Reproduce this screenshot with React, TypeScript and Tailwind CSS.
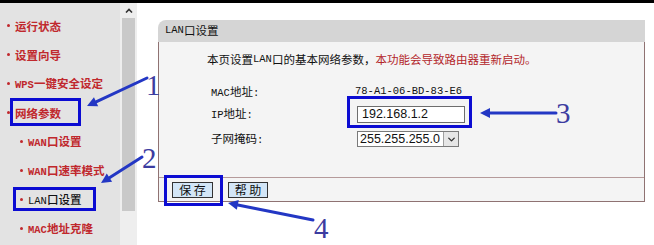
import { ChevronDown } from "lucide-react";

const cjk = "font-['Noto_Sans_CJK_SC',sans-serif]";
const mono = "font-['Liberation_Mono',monospace] text-[10.5px]";

function NavItem({ label, sub, active }: { label: React.ReactNode; sub?: boolean; active?: boolean }) {
  return (
    <div className={`flex h-[29px] items-center ${sub ? "pl-[20px]" : "pl-[7px]"}`}>
      <span className="h-[3px] w-[3px] rounded-full bg-[#c0282d]" />
      <span
        className={`ml-[5px] whitespace-nowrap text-[11.5px] leading-[14px] ${
          active ? "font-medium text-[#111]" : "font-semibold text-[#c0282d]"
        }`}
      >
        {label}
      </span>
    </div>
  );
}

type Pt = [number, number];

function Arrow({ from, to }: { from: Pt; to: Pt }) {
  const [x1, y1] = from;
  const [x2, y2] = to;
  const dx = x2 - x1;
  const dy = y2 - y1;
  const len = Math.hypot(dx, dy);
  const ux = dx / len;
  const uy = dy / len;
  const hl = 10;
  const hw = 5;
  const bx = x2 - ux * hl;
  const by = y2 - uy * hl;
  const head = `${x2},${y2} ${bx - uy * hw},${by + ux * hw} ${bx + uy * hw},${by - ux * hw}`;
  return (
    <g>
      <line x1={x1} y1={y1} x2={bx} y2={by} stroke="#2337c4" strokeWidth={3} strokeLinecap="round" />
      <polygon points={head} fill="#2337c4" />
    </g>
  );
}

export default function App() {
  return (
    <div className={`relative h-[245px] w-[654px] overflow-hidden bg-white ${cjk}`}>
      <div className="h-[3px] bg-black" />
      <div className="flex h-[242px]">
        {/* left menu */}
        <div className="w-[120px] bg-[#e3e3e3] pt-[8px]">
          <NavItem label="运行状态" />
          <NavItem label="设置向导" />
          <NavItem label={<><span className={mono}>WPS</span>一键安全设定</>} />
          <NavItem label="网络参数" />
          <NavItem sub label={<><span className={mono}>WAN</span>口设置</>} />
          <NavItem sub label={<><span className={mono}>WAN</span>口速率模式</>} />
          <NavItem sub active label={<><span className={mono}>LAN</span>口设置</>} />
          <NavItem sub label={<><span className={mono}>MAC</span>地址克隆</>} />
        </div>

        {/* scrollbar */}
        <div className="flex w-[17px] flex-col bg-[#eeeeee]">
          <div className="flex h-[15px] items-center justify-center">
            <svg width="8" height="5" viewBox="0 0 8 5">
              <polyline points="1,4.5 4,1.5 7,4.5" fill="none" stroke="#333" strokeWidth="1.6" />
            </svg>
          </div>
          <div className="mx-[2px] h-[193px] bg-[#c9c9c9]" />
        </div>

        {/* main */}
        <div className="flex-1 pl-[21px] pt-[17px]">
          <div className="w-[487px]">
            <div className="flex h-[22px] items-center rounded-tl-[8px] bg-[#d5d5d5] pl-[7px] text-[11.5px] text-[#111]">
              <span className={mono}>LAN</span>口设置
            </div>
            <div className="border border-t-0 border-[#8f7272] bg-[#f4f4f4]">
              <div className="h-[135px] pt-[11px]">
                <div className="flex h-[14px] items-center whitespace-nowrap pl-[48px] text-[11.5px] text-[#111]">
                  本页设置<span className={mono}>LAN</span>口的基本网络参数，
                  <span className="text-[#b3262a]">本功能会导致路由器重新启动。</span>
                </div>
                <div className="mt-[15px] pl-[52px] text-[11.5px] text-[#111]">
                  <div className="flex h-[20px] items-center">
                    <span className="w-[146px]">
                      <span className={mono}>MAC</span>地址<span className={mono}>:</span>
                    </span>
                    <span className={`${mono} -ml-[2px]`}>78-A1-06-BD-83-E6</span>
                  </div>
                  <div className="mt-[4px] flex h-[17px] items-center">
                    <span className="w-[146px]">
                      <span className={mono}>IP</span>地址<span className={mono}>:</span>
                    </span>
                    <input
                      readOnly
                      value="192.168.1.2"
                      className="h-[17px] w-[108px] border border-[#6e6e6e] bg-white pl-[4px] font-['Liberation_Sans',Arial,sans-serif] text-[12.5px] text-[#111] outline-none"
                    />
                  </div>
                  <div className="mt-[8px] flex h-[16px] items-center">
                    <span className="w-[146px]">
                      子网掩码<span className={mono}>:</span>
                    </span>
                    <div className="flex h-[16px] w-[102px] items-center border border-[#7a7a7a] bg-white">
                      <span className="flex-1 pl-[2px] font-['Liberation_Sans',Arial,sans-serif] text-[12.5px] leading-none text-[#111]">
                        255.255.255.0
                      </span>
                      <span className="flex h-[14px] w-[15px] items-center justify-center border-l border-[#a0a0a0] bg-[#e6e6e6]">
                        <ChevronDown size={11} strokeWidth={3} color="#333" />
                      </span>
                    </div>
                  </div>
                </div>
              </div>
              <div className="flex h-[24px] gap-[15px] border-t border-[#b59a9a] pl-[13px] pt-[4px]">
                <button className="flex h-[16px] w-[41px] items-center justify-center border border-[#333] bg-[#d3e6f7] text-[12px] leading-none text-[#111]">
                  保 存
                </button>
                <button className="flex h-[16px] w-[40px] items-center justify-center border border-[#333] bg-[#d3e6f7] text-[12px] leading-none text-[#111]">
                  帮 助
                </button>
              </div>
            </div>
          </div>
        </div>
      </div>

      {/* annotations */}
      <div className="pointer-events-none absolute left-[10px] top-[98px] h-[28px] w-[71px] border-[3px] border-[#0c0cd2]" />
      <div className="pointer-events-none absolute left-[13px] top-[187px] h-[24px] w-[83px] border-[3px] border-[#0c0cd2]" />
      <div className="pointer-events-none absolute left-[347px] top-[96px] h-[32px] w-[125px] border-[3px] border-[#0c0cd2]" />
      <div className="pointer-events-none absolute left-[164px] top-[175px] h-[31px] w-[59px] border-[3px] border-[#0c0cd2]" />

      <svg className="pointer-events-none absolute left-0 top-0" width="654" height="245">
        <Arrow from={[147, 78]} to={[87, 106]} />
        <Arrow from={[142, 157]} to={[101, 183]} />
        <Arrow from={[556, 113]} to={[480, 113]} />
        <Arrow from={[313, 220]} to={[228, 203]} />
      </svg>

      <span className="absolute left-[146px] top-[71px] font-['Liberation_Serif',serif] text-[29px] leading-none text-[#3c3ca0]">1</span>
      <span className="absolute left-[142px] top-[144px] font-['Liberation_Serif',serif] text-[29px] leading-none text-[#3c3ca0]">2</span>
      <span className="absolute left-[556px] top-[99px] font-['Liberation_Serif',serif] text-[29px] leading-none text-[#3c3ca0]">3</span>
      <span className="absolute left-[314px] top-[214px] font-['Liberation_Serif',serif] text-[29px] leading-none text-[#3c3ca0]">4</span>
    </div>
  );
}
